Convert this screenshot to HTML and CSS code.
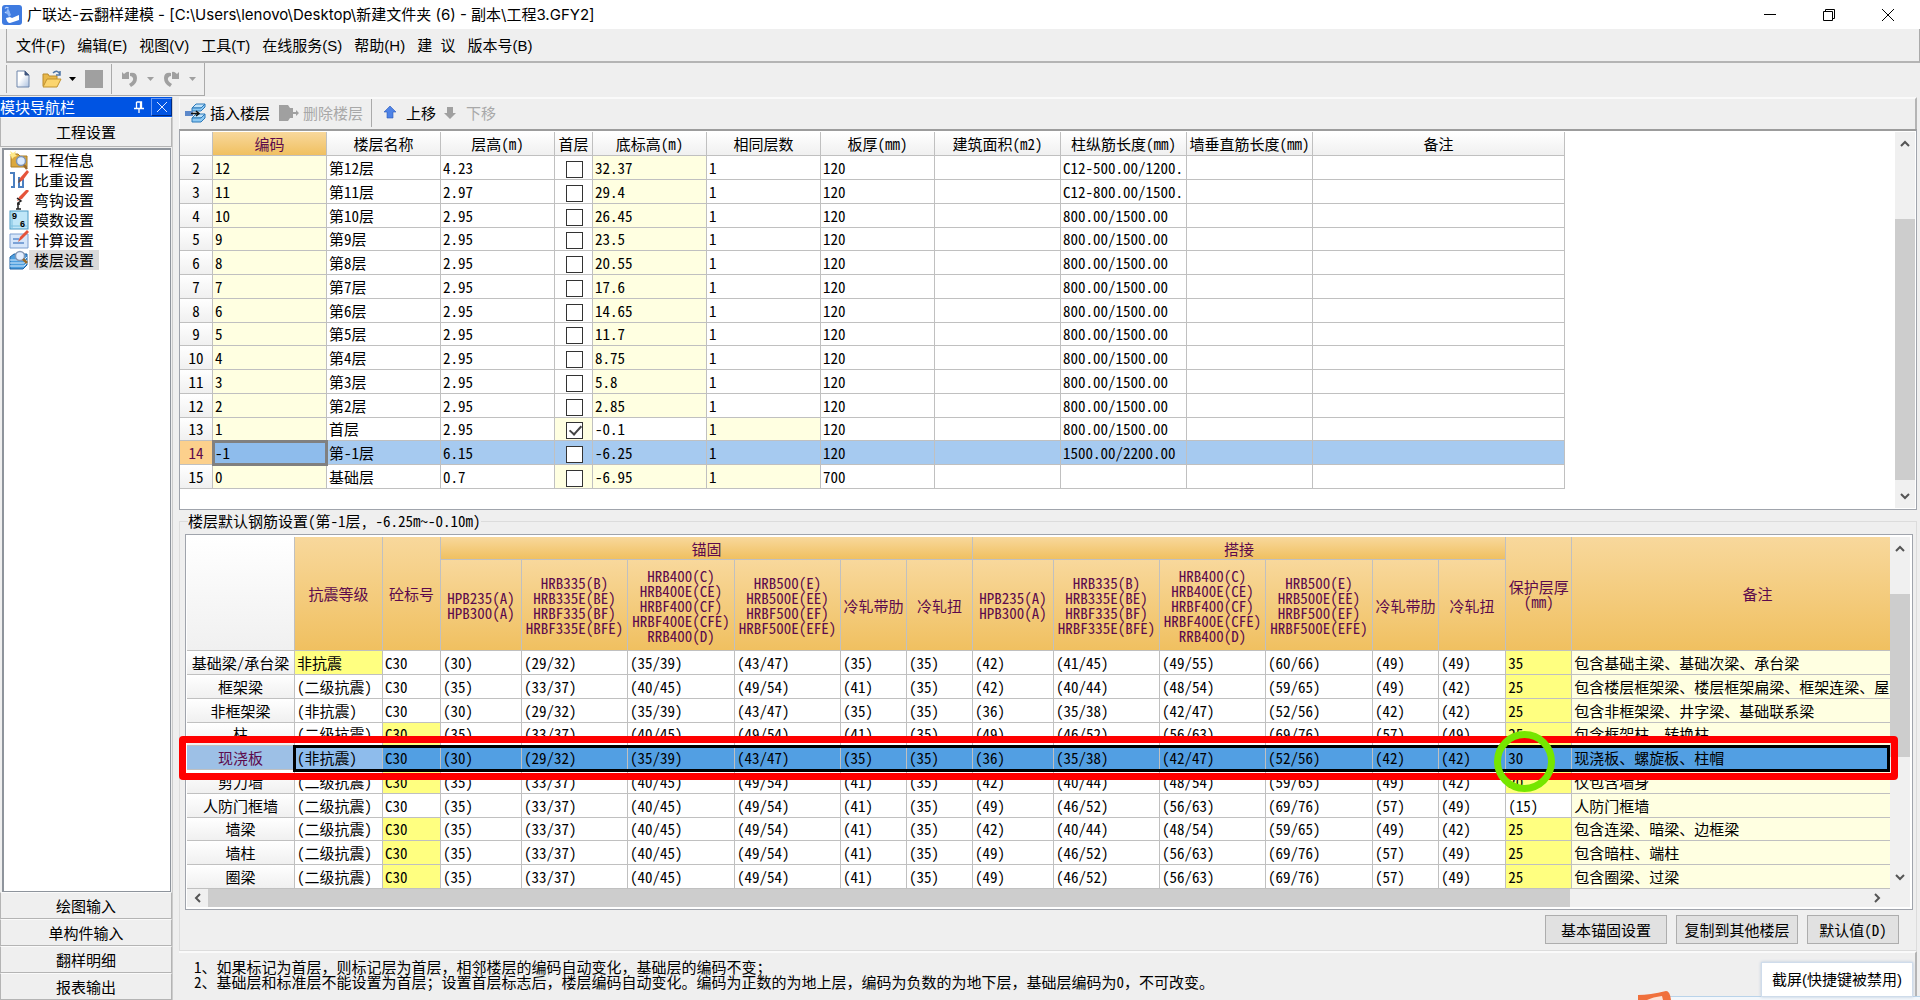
FILE: index.html
```html
<!DOCTYPE html>
<html lang="zh-CN">
<head>
<meta charset="utf-8">
<title>广联达-云翻样建模</title>
<link rel="stylesheet" href="styles.css">
</head>
<body>
<div class="app">
<header class="titlebar">
  <svg class="logo" width="20" height="20" viewBox="0 0 20 20"><rect width="20" height="20" rx="3" fill="#3f7be0"/><path d="M3 3.500q1.500-2 3.500-.5M3 7q2 2 4-1" fill="none" stroke="#bcd6ff" stroke-width="1.200"/><path d="M6 3l3 7-2 2-3-5z" fill="#8fb8f8"/><path d="M4 13l4-1 2 1 7-3v5l-9 3q-3 0-4-5z" fill="#fff"/></svg>
  <h1>广联达-云翻样建模 - [C:\Users\lenovo\Desktop\新建文件夹 (6) - 副本\工程3.GFY2]</h1>
  <div class="winctl">
    <button type="button" aria-label="最小化"><svg width="12" height="12" viewBox="0 0 12 12"><path d="M0 5.500h12" stroke="#000"/></svg></button>
    <button type="button" aria-label="还原"><svg width="12" height="12" viewBox="0 0 12 12" fill="none" stroke="#000"><path d="M.5 2.500h9v9h-9zM2.500 2.500v-2h9v9h-2"/></svg></button>
    <button type="button" aria-label="关闭"><svg width="12" height="12" viewBox="0 0 12 12"><path d="M0 0l12 12M12 0L0 12" stroke="#000"/></svg></button>
  </div>
</header>
<nav class="menubar">
  <button type="button">文件(F)</button><button type="button">编辑(E)</button><button type="button">视图(V)</button><button type="button">工具(T)</button><button type="button">在线服务(S)</button><button type="button">帮助(H)</button><button type="button">建&nbsp; 议</button><button type="button">版本号(B)</button>
</nav>
<div class="toolrow">
  <div class="tools">
    <button type="button" aria-label="新建"><svg width="14" height="18" viewBox="0 0 14 18"><defs><linearGradient id="pg" x2="1" y2="1"><stop offset=".4" stop-color="#fff"/><stop offset="1" stop-color="#a9bfdf"/></linearGradient></defs><path d="M1 1h8l4 4v12H1z" fill="url(#pg)" stroke="#6f86ab"/><path d="M9 1v4h4" fill="#40577e" stroke="#40577e"/></svg></button>
    <button type="button" aria-label="打开"><svg width="20" height="18" viewBox="0 0 20 18"><path d="M1 16V4h5l1 2h8v3" fill="#e8b84a" stroke="#b98a2a"/><path d="M1 17l4-8h14l-4 8z" fill="#fbd56f" stroke="#c0922f"/><path d="M11 3q4-4 7 1M18 1v4h-4" fill="none" stroke="#4f75a5" stroke-width="1.500"/></svg></button>
    <button type="button" class="drop" aria-label="打开列表"><svg width="7" height="4" viewBox="0 0 7 4"><path d="M0 0h7L3.500 4z"/></svg></button>
    <button type="button" aria-label="保存"><svg width="18" height="18"><rect width="18" height="18" fill="#a0a0a0"/></svg></button>
    <i class="sep"></i>
    <button type="button" class="hist" aria-label="撤销"><svg width="17" height="17" viewBox="0 0 17 17"><path d="M1 1l2 2q3-3 5-2v7H1zM9 2q7-1 7 5 0 6-6 9l-2-3q5-3 4-6-1-2-3-2z" fill="#a0a0a0"/></svg></button>
    <button type="button" class="drop" aria-label="撤销列表"><svg width="7" height="4" viewBox="0 0 7 4"><path d="M0 0h7L3.500 4z" fill="#a0a0a0"/></svg></button>
    <button type="button" class="hist" aria-label="重做"><svg width="17" height="17" viewBox="0 0 17 17"><path d="M16 1l-2 2q-3-3-5-2v7h7zM8 2Q1 1 1 7q0 6 6 9l2-3Q4 10 5 7q1-2 3-2z" fill="#a0a0a0"/></svg></button>
    <button type="button" class="drop" aria-label="重做列表"><svg width="7" height="4" viewBox="0 0 7 4"><path d="M0 0h7L3.500 4z" fill="#a0a0a0"/></svg></button>
  </div>
</div>
<div class="body">
<aside class="side">
  <div class="side-title"><span>模块导航栏</span>
    <svg width="10" height="12" viewBox="0 0 10 12"><path d="M2.500 1h5v6M2.500 1v6M0 7.500h10M5 8v4M6.500 1v6" fill="none" stroke="#fff" stroke-width="1.300"/></svg>
    <button type="button" aria-label="关闭导航栏"><svg width="10" height="10" viewBox="0 0 10 10"><path d="M0 0l10 10M10 0L0 10" stroke="#dfe8ff"/></svg></button>
  </div>
  <button type="button" class="side-btn">工程设置</button>
  <ul class="side-list">
    <li><svg width="20" height="20" viewBox="0 0 20 20"><path d="M2 4h7l2 2h7v11H2z" fill="#dba83d" stroke="#a97d26"/><path d="M1 1l3 2 3-2-1 3 2 2-3 1-2 2-1-3-2-1 2-1z" fill="#ffe98a"/><circle cx="12" cy="11" r="4.500" fill="#dcecff" stroke="#7e93b3" stroke-width="1.500"/><path d="M15 15l3 4" stroke="#9a6a2a" stroke-width="2.500"/></svg><a href="#">工程信息</a></li>
    <li><svg width="20" height="20" viewBox="0 0 20 20"><path d="M1 3h4v14H2M10 7v10h4V9" fill="none" stroke="#4b7fc0" stroke-width="2"/><path d="M9 13l2-5 7-8 2 2-6 8z" fill="#e5533a"/><path d="M9 13l1-4 2 2z" fill="#555"/></svg><a href="#">比重设置</a></li>
    <li><svg width="20" height="20" viewBox="0 0 20 20"><path d="M8 11l2-4 8-8 2 2-7 8z" fill="#e5533a"/><path d="M8 8l4 3-3 2v6M7 19h5M8 14h3" fill="none" stroke="#222" stroke-width="1.500"/></svg><a href="#">弯钩设置</a></li>
    <li><svg width="20" height="20" viewBox="0 0 20 20"><rect x="1" y="1" width="18" height="18" fill="#bfe6f8" stroke="#4b9ac4"/><path d="M1 16h18M3 1v18" stroke="#7cc0e0"/><text x="3" y="9" class="ico-num">9</text><text x="11" y="17" class="ico-num">6</text></svg><a href="#">模数设置</a></li>
    <li><svg width="20" height="20" viewBox="0 0 20 20"><path d="M1 4h18v14H1z" fill="#d6e6fa" stroke="#7d9fd0"/><path d="M4 9h6M4 13h11" stroke="#5e8ccb" stroke-width="1.500"/><path d="M9 12l2-5 7-7 2 2-7 7z" fill="#e5533a"/></svg><a href="#">计算设置</a></li>
    <li class="on"><svg width="20" height="20" viewBox="0 0 20 20"><path d="M1 7l4-3h13v11l-4 4H1z" fill="#4d9ede" stroke="#1f62a5"/><path d="M1 10h14l3-3M1 13h14l3-3M1 16h14l3-3" fill="none" stroke="#d8edff"/><circle cx="11" cy="6" r="4.500" fill="#e4efff" stroke="#8497b5" stroke-width="1.500"/><path d="M14 9l4 4" stroke="#9a6a2a" stroke-width="2.500"/></svg><a href="#">楼层设置</a></li>
  </ul>
  <button type="button" class="side-btn">绘图输入</button>
  <button type="button" class="side-btn">单构件输入</button>
  <button type="button" class="side-btn">翻样明细</button>
  <button type="button" class="side-btn">报表输出</button>
</aside>
<main class="main">
  <div class="floorbar">
    <button type="button"><svg width="21" height="20" viewBox="0 0 21 20"><path d="M7 5l4-4h9l-4 4zM7 15l4-4h9l-4 4z" fill="#bfe2fa" stroke="#2b78b9"/><path d="M7 5v3h9l4-4V1l-4 4zM7 15v4h9l4-4v-4l-4 4z" fill="#8cc8f2" stroke="#2b78b9"/><rect y="8" width="8" height="5" fill="#5c88c9"/><path d="M6 10.500h7M11 8l3 2.500L11 13" fill="none" stroke="#111" stroke-width="1.500"/></svg>插入楼层</button>
    <button type="button" disabled><svg width="21" height="18" viewBox="0 0 21 18"><path d="M1 1h9l2 3h3v10h-3l-2 3H1zM15 8h3v-2l3 3-3 3v-2h-3z" fill="#a0a0a0"/></svg>删除楼层</button>
    <i class="sep"></i>
    <button type="button" class="move"><svg width="12" height="13" viewBox="0 0 12 13"><path d="M6 0l6 6H9v6H3V6H0z" fill="#4f83e6" stroke="#2857b8" stroke-width=".6"/></svg>上移</button>
    <button type="button" class="move" disabled><svg width="12" height="13" viewBox="0 0 12 13"><path d="M6 13l6-6H9V1H3v6H0z" fill="#a0a0a0"/></svg>下移</button>
  </div>
  <section class="floors">
    <div class="floors-view">
    <table class="grid floor-table">
      <colgroup><col class="w33"><col class="w114"><col class="w114"><col class="w114"><col class="w38"><col class="w114"><col class="w114"><col class="w114"><col class="w126"><col class="w126"><col class="w126"><col></colgroup>
      <thead><tr><th></th><th class="act">编码</th><th>楼层名称</th><th>层高(m)</th><th>首层</th><th>底标高(m)</th><th>相同层数</th><th>板厚(mm)</th><th>建筑面积(m2)</th><th>柱纵筋长度(mm)</th><th>墙垂直筋长度(mm)</th><th>备注</th></tr></thead>
      <tbody>
      <tr><th>2</th><td class="y">12</td><td>第12层</td><td>4.23</td><td class="c"><input type="checkbox" aria-label="首层 12"></td><td class="y">32.37</td><td>1</td><td>120</td><td></td><td>C12-500.00/1200.</td><td></td><td></td></tr>
      <tr><th>3</th><td class="y">11</td><td>第11层</td><td>2.97</td><td class="c"><input type="checkbox" aria-label="首层 11"></td><td class="y">29.4</td><td>1</td><td>120</td><td></td><td>C12-800.00/1500.</td><td></td><td></td></tr>
      <tr><th>4</th><td class="y">10</td><td>第10层</td><td>2.95</td><td class="c"><input type="checkbox" aria-label="首层 10"></td><td class="y">26.45</td><td>1</td><td>120</td><td></td><td>800.00/1500.00</td><td></td><td></td></tr>
      <tr><th>5</th><td class="y">9</td><td>第9层</td><td>2.95</td><td class="c"><input type="checkbox" aria-label="首层 9"></td><td class="y">23.5</td><td>1</td><td>120</td><td></td><td>800.00/1500.00</td><td></td><td></td></tr>
      <tr><th>6</th><td class="y">8</td><td>第8层</td><td>2.95</td><td class="c"><input type="checkbox" aria-label="首层 8"></td><td class="y">20.55</td><td>1</td><td>120</td><td></td><td>800.00/1500.00</td><td></td><td></td></tr>
      <tr><th>7</th><td class="y">7</td><td>第7层</td><td>2.95</td><td class="c"><input type="checkbox" aria-label="首层 7"></td><td class="y">17.6</td><td>1</td><td>120</td><td></td><td>800.00/1500.00</td><td></td><td></td></tr>
      <tr><th>8</th><td class="y">6</td><td>第6层</td><td>2.95</td><td class="c"><input type="checkbox" aria-label="首层 6"></td><td class="y">14.65</td><td>1</td><td>120</td><td></td><td>800.00/1500.00</td><td></td><td></td></tr>
      <tr><th>9</th><td class="y">5</td><td>第5层</td><td>2.95</td><td class="c"><input type="checkbox" aria-label="首层 5"></td><td class="y">11.7</td><td>1</td><td>120</td><td></td><td>800.00/1500.00</td><td></td><td></td></tr>
      <tr><th>10</th><td class="y">4</td><td>第4层</td><td>2.95</td><td class="c"><input type="checkbox" aria-label="首层 4"></td><td class="y">8.75</td><td>1</td><td>120</td><td></td><td>800.00/1500.00</td><td></td><td></td></tr>
      <tr><th>11</th><td class="y">3</td><td>第3层</td><td>2.95</td><td class="c"><input type="checkbox" aria-label="首层 3"></td><td class="y">5.8</td><td>1</td><td>120</td><td></td><td>800.00/1500.00</td><td></td><td></td></tr>
      <tr><th>12</th><td class="y">2</td><td>第2层</td><td>2.95</td><td class="c"><input type="checkbox" aria-label="首层 2"></td><td class="y">2.85</td><td>1</td><td>120</td><td></td><td>800.00/1500.00</td><td></td><td></td></tr>
      <tr><th>13</th><td class="y">1</td><td>首层</td><td>2.95</td><td class="c y"><input type="checkbox" checked aria-label="首层 1"></td><td>-0.1</td><td class="y">1</td><td>120</td><td></td><td>800.00/1500.00</td><td></td><td></td></tr>
      <tr class="sel"><th>14</th><td class="cur">-1</td><td>第-1层</td><td>6.15</td><td class="c"><input type="checkbox" aria-label="首层 -1"></td><td>-6.25</td><td>1</td><td>120</td><td></td><td>1500.00/2200.00</td><td></td><td></td></tr>
      <tr><th>15</th><td class="y">0</td><td>基础层</td><td>0.7</td><td class="c y"><input type="checkbox" aria-label="首层 0"></td><td class="y">-6.95</td><td class="y">1</td><td>700</td><td></td><td></td><td></td><td></td></tr>
      </tbody>
    </table>
    </div>
    <div class="vbar vbar-top"><svg width="10" height="7" viewBox="0 0 10 7"><path d="M1 6l4-4 4 4" /></svg><i></i><svg width="10" height="7" viewBox="0 0 10 7"><path d="M1 1l4 4 4-4"/></svg></div>
  </section>
  <fieldset class="rebar">
    <legend>楼层默认钢筋设置(第-1层, -6.25m~-0.10m)</legend>
    <div class="rebar-panel">
      <div class="rebar-top">
      <div class="rebar-view">
      <table class="grid rebar-table">
        <colgroup><col class="w108"><col class="w88"><col class="w58"><col class="w81"><col class="w106"><col class="w107"><col class="w106"><col class="w66"><col class="w66"><col class="w81"><col class="w106"><col class="w106"><col class="w107"><col class="w66"><col class="w67"><col class="w66"><col></colgroup>
        <thead>
        <tr class="grp"><th rowspan="2" class="corner"></th><th rowspan="2">抗震等级</th><th rowspan="2">砼标号</th><th colspan="6">锚固</th><th colspan="6">搭接</th><th rowspan="2">保护层厚<br>(mm)</th><th rowspan="2">备注</th></tr>
        <tr class="sub"><th>HPB235(A)<br>HPB300(A)</th><th>HRB335(B)<br>HRB335E(BE)<br>HRBF335(BF)<br>HRBF335E(BFE)</th><th>HRB400(C)<br>HRB400E(CE)<br>HRBF400(CF)<br>HRBF400E(CFE)<br>RRB400(D)</th><th>HRB500(E)<br>HRB500E(EE)<br>HRBF500(EF)<br>HRBF500E(EFE)</th><th>冷轧带肋</th><th>冷轧扭</th><th>HPB235(A)<br>HPB300(A)</th><th>HRB335(B)<br>HRB335E(BE)<br>HRBF335(BF)<br>HRBF335E(BFE)</th><th>HRB400(C)<br>HRB400E(CE)<br>HRBF400(CF)<br>HRBF400E(CFE)<br>RRB400(D)</th><th>HRB500(E)<br>HRB500E(EE)<br>HRBF500(EF)<br>HRBF500E(EFE)</th><th>冷轧带肋</th><th>冷轧扭</th></tr>
        </thead>
        <tbody>
        <tr><th>基础梁/承台梁</th><td class="k">非抗震</td><td>C30</td><td>(30)</td><td>(29/32)</td><td>(35/39)</td><td>(43/47)</td><td>(35)</td><td>(35)</td><td>(42)</td><td>(41/45)</td><td>(49/55)</td><td>(60/66)</td><td>(49)</td><td>(49)</td><td class="k">35</td><td class="y">包含基础主梁、基础次梁、承台梁</td></tr>
        <tr><th>框架梁</th><td>(二级抗震)</td><td>C30</td><td>(35)</td><td>(33/37)</td><td>(40/45)</td><td>(49/54)</td><td>(41)</td><td>(35)</td><td>(42)</td><td>(40/44)</td><td>(48/54)</td><td>(59/65)</td><td>(49)</td><td>(42)</td><td class="k">25</td><td class="y">包含楼层框架梁、楼层框架扁梁、框架连梁、屋</td></tr>
        <tr><th>非框架梁</th><td>(非抗震)</td><td>C30</td><td>(30)</td><td>(29/32)</td><td>(35/39)</td><td>(43/47)</td><td>(35)</td><td>(35)</td><td>(36)</td><td>(35/38)</td><td>(42/47)</td><td>(52/56)</td><td>(42)</td><td>(42)</td><td class="k">25</td><td class="y">包含非框架梁、井字梁、基础联系梁</td></tr>
        <tr><th>柱</th><td>(二级抗震)</td><td class="k">C30</td><td>(35)</td><td>(33/37)</td><td>(40/45)</td><td>(49/54)</td><td>(41)</td><td>(35)</td><td>(49)</td><td>(46/52)</td><td>(56/63)</td><td>(69/76)</td><td>(57)</td><td>(49)</td><td class="k">25</td><td class="y">包含框架柱、转换柱</td></tr>
        <tr class="pick"><th>现浇板</th><td class="cur">(非抗震)</td><td>C30</td><td>(30)</td><td>(29/32)</td><td>(35/39)</td><td>(43/47)</td><td>(35)</td><td>(35)</td><td>(36)</td><td>(35/38)</td><td>(42/47)</td><td>(52/56)</td><td>(42)</td><td>(42)</td><td>30</td><td>现浇板、螺旋板、柱帽</td></tr>
        <tr><th>剪力墙</th><td>(二级抗震)</td><td class="k">C30</td><td>(35)</td><td>(33/37)</td><td>(40/45)</td><td>(49/54)</td><td>(41)</td><td>(35)</td><td>(42)</td><td>(40/44)</td><td>(48/54)</td><td>(59/65)</td><td>(49)</td><td>(42)</td><td class="k">20</td><td class="y">仅包含墙身</td></tr>
        <tr><th>人防门框墙</th><td>(二级抗震)</td><td>C30</td><td>(35)</td><td>(33/37)</td><td>(40/45)</td><td>(49/54)</td><td>(41)</td><td>(35)</td><td>(49)</td><td>(46/52)</td><td>(56/63)</td><td>(69/76)</td><td>(57)</td><td>(49)</td><td>(15)</td><td class="y">人防门框墙</td></tr>
        <tr><th>墙梁</th><td>(二级抗震)</td><td class="k">C30</td><td>(35)</td><td>(33/37)</td><td>(40/45)</td><td>(49/54)</td><td>(41)</td><td>(35)</td><td>(42)</td><td>(40/44)</td><td>(48/54)</td><td>(59/65)</td><td>(49)</td><td>(42)</td><td class="k">25</td><td class="y">包含连梁、暗梁、边框梁</td></tr>
        <tr><th>墙柱</th><td>(二级抗震)</td><td class="k">C30</td><td>(35)</td><td>(33/37)</td><td>(40/45)</td><td>(49/54)</td><td>(41)</td><td>(35)</td><td>(49)</td><td>(46/52)</td><td>(56/63)</td><td>(69/76)</td><td>(57)</td><td>(49)</td><td class="k">25</td><td class="y">包含暗柱、端柱</td></tr>
        <tr><th>圈梁</th><td>(二级抗震)</td><td class="k">C30</td><td>(35)</td><td>(33/37)</td><td>(40/45)</td><td>(49/54)</td><td>(41)</td><td>(35)</td><td>(49)</td><td>(46/52)</td><td>(56/63)</td><td>(69/76)</td><td>(57)</td><td>(49)</td><td class="k">25</td><td class="y">包含圈梁、过梁</td></tr>
        </tbody>
      </table>
      <div class="row-frame"></div>
      </div>
      <div class="vbar vbar-low"><svg width="10" height="7" viewBox="0 0 10 7"><path d="M1 6l4-4 4 4"/></svg><i></i><svg width="10" height="7" viewBox="0 0 10 7"><path d="M1 1l4 4 4-4"/></svg></div>
      </div>
      <div class="hbar"><svg width="7" height="10" viewBox="0 0 7 10"><path d="M6 1L2 5l4 4"/></svg><i></i><svg width="7" height="10" viewBox="0 0 7 10"><path d="M1 1l4 4-4 4"/></svg></div>
      <div class="mark-box"></div>
      <div class="mark-ring"></div>
    </div>
    <div class="actions"><button type="button">基本锚固设置</button><button type="button">复制到其他楼层</button><button type="button">默认值(D)</button></div>
  </fieldset>
  <footer class="hints">
    <p>1、如果标记为首层，则标记层为首层，相邻楼层的编码自动变化，基础层的编码不变；</p>
    <p>2、基础层和标准层不能设置为首层；设置首层标志后，楼层编码自动变化。编码为正数的为地上层，编码为负数的为地下层，基础层编码为0，不可改变。</p>
  </footer>
</main>
</div>
<svg class="peek" width="300" height="9" viewBox="0 0 300 9"><path d="M28 5h272v4H28z" fill="#f3f7fb"/><path d="M28 5.500h272" stroke="#b9d3ea"/><path d="M0 4q12 0 28-4q4 0 5 9H0z" fill="#f0703c"/><path d="M9 9q6-3 15-4l1 4z" fill="#fbe3d8"/></svg>
<div class="tip" role="tooltip">截屏(快捷键被禁用)</div>
</div>
</body>
</html>
```
FILE: styles.css
```css
* { box-sizing: border-box; }
body { margin: 0; background: #efefef; color: #000; }
body, button, input { font: 15px/20px "Noto Sans Mono CJK SC", "Liberation Mono", "Noto Sans CJK SC", monospace; }
button { border: 0; padding: 0; background: none; color: inherit; display: inline-flex; align-items: center; justify-content: center; white-space: nowrap; }
.app { position: relative; min-height: 100vh; display: flex; flex-direction: column; overflow: hidden; }

.titlebar { display: flex; align-items: center; height: 29px; padding-left: 2px; background: #fff; }
.titlebar h1 { flex: 1; margin: 0 0 0 5px; font: 15px/28px Inter, "Noto Sans CJK SC", sans-serif; }
.winctl { display: flex; gap: 10px; padding-right: 8px; }
.winctl button { width: 49px; height: 28px; }

.menubar, .tip { font-family: "Liberation Sans", "Noto Sans CJK SC", sans-serif; }
.menubar { display: flex; gap: 12px; height: 34px; margin-left: 6px; padding: 2px 0 0 9px; border-left: 1px solid #aaa; border-bottom: 2px solid #b4b4b4; border-right: 1px solid #aaa; }
.menubar button { font-family: inherit; }

.toolrow { height: 34px; }
.tools { display: flex; align-items: center; width: 205px; height: 33px; padding: 0 8px 0 6px; border-right: 1px solid #aaa; border-bottom: 1px solid #aaa; }
.tools::before { content: ""; width: 1px; height: 28px; background: #aaa; margin-right: 9px; }
.tools button { margin-right: 12px; }
.tools .drop { margin: 0 9px 0 0; }
.tools button:nth-of-type(2) { margin-right: 7px; }
.tools button:nth-of-type(4) { margin-right: 8px; }
.tools .hist { margin-right: 9px; }
.tools .drop:last-child { margin-right: 0; }
.sep { width: 1px; height: 30px; background: #aaa; margin-right: 9px; flex: none; }

.body { flex: 1; display: flex; gap: 6px; }
.side { width: 173px; display: flex; flex-direction: column; border-right: 1px solid #ccc; }
.side-title { display: flex; align-items: center; height: 20px; background: #0054e3; color: #fff; }
.side-title span { flex: 1; }
.side-title button { width: 21px; height: 18px; margin-left: 7px; border: 1px solid #6d9cf5; border-right-color: #002a80; border-bottom-color: #002a80; }
.side-btn { height: 27px; border: 1px solid #b4b4b4; border-top-color: #fafafa; }
.side-title + .side-btn { height: 30px; }
.side-list { flex: 1; margin: 1px 1px 0 2px; padding: 0 5px; list-style: none; background: #fff; border: 1px solid #8e949c; border-top-width: 2px; border-left-width: 2px; }
.side-list li { display: flex; align-items: center; height: 20px; }
.side-list a { color: #000; text-decoration: none; padding: 0 5px; line-height: 20px; }
.side-list .on a { background: #d9d9d9; }
.ico-num { font: bold 9px "Liberation Sans", sans-serif; }

.main { flex: 1; min-width: 0; display: flex; flex-direction: column; padding-right: 3px; }
.floorbar { display: flex; align-items: center; height: 32px; padding: 0 0 3px 5px; border-top: 2px solid #fafafa; border-right: 2px solid #b4b4b4; border-left: 1px solid #fafafa; }
.floorbar button { gap: 4px; margin-right: 8px; }
.floorbar .sep { margin-right: 12px; height: 28px; }
.floorbar .move { gap: 10px; }
.floorbar :disabled { color: #a8a8a8; }

.floors { display: flex; height: 381px; background: #fff; border: 1px solid #a0a4ac; border-top: 2px solid #9c9c9c; padding: 1px 1px 1px 0; }
.floors-view { flex: 1; overflow: hidden; }
.floor-table { width: 1385px; }

.grid { table-layout: fixed; border-collapse: separate; border-spacing: 0; }
.grid th, .grid td { padding: 0; border-right: 1px solid #c0c0c0; border-bottom: 1px solid #c0c0c0; font-weight: 400; white-space: nowrap; overflow: hidden; line-height: 20px; }
.grid td { padding-left: 2px; background: #fff; }
.grid tr { height: 24px; }
.grid tbody tr:nth-child(4n) { height: 23px; }
.grid th { background: linear-gradient(#fff, #f0f0f0); }
.grid .act, .rebar-table thead th { background: linear-gradient(#f8d89c, #f0c060); color: #5c0a4c; }
.grid td.y { background: #ffffe1; }
.grid td.k { background: #ffff80; }
.grid td.c { padding: 0; text-align: center; }
.grid .sel td { background: #a6caf0; }
.grid .sel th { background: #fcd08c; color: #5c0a4c; }
.grid .sel .cur { background: #8ebcec; outline: 3px solid #808080; outline-offset: -2px; }
.grid input { appearance: none; display: inline-block; width: 17px; height: 17px; margin: 0 0 0 1px; border: 1px solid #333; background: #fff; vertical-align: middle; }
.grid input:checked::after { content: ""; display: block; width: 5px; height: 10px; margin: 0 0 0 5px; border: solid #444; border-width: 0 2px 2px 0; transform: rotate(42deg); }

.w33 { width: 33px; } .w38 { width: 38px; } .w58 { width: 58px; } .w66 { width: 66px; } .w67 { width: 67px; }
.w81 { width: 81px; } .w88 { width: 88px; } .w106 { width: 106px; } .w107 { width: 107px; } .w108 { width: 108px; }
.w114 { width: 114px; } .w126 { width: 126px; }

.vbar { width: 20px; display: flex; flex-direction: column; align-items: center; background: #f0f0f0; padding: 8px 0; }
.vbar i, .hbar i { background: #cdcdcd; }
.vbar i { width: 20px; }
.vbar path, .hbar path { fill: none; stroke: #555; stroke-width: 2; }
.vbar-top i { flex: 1; margin: 72px 0 13px; }
.vbar-low i { height: 163px; margin: 42px 0 auto; }

.rebar { min-width: 0; margin: 0; padding: 2px 3px 6px 5px; border: 1px solid #dcdcdc; }
.rebar legend { margin-left: 3px; padding: 0; line-height: 22px; }
.rebar-panel { position: relative; border: 1px solid #a0a4ac; background: #fff; padding: 2px 2px 2px 1px; }
.rebar-top { display: flex; height: 352px; }
.rebar-view { position: relative; flex: 1; min-width: 0; overflow: hidden; }
/* the remarks column runs past the viewport, behind the scrollbar */
.rebar-table { width: calc(100% + 54px); }
.grid .grp { height: 23px; }
.grid .sub { height: 91px; }
.rebar-table thead th { line-height: 15px; }
.rebar-table thead .corner { background: linear-gradient(#fff, #f0f0f0); }
.grid .pick td { background: #529fe3; }
.grid .pick th { background: #9dc0e6; color: #5c0a4c; }
.grid .pick .cur { background: #8ebcec; }
.row-frame { position: absolute; left: 106px; right: 0; top: 208px; height: 27px; border: 3px solid #000; }
.mark-box { position: absolute; left: -7px; right: 14px; top: 201px; height: 44px; border: 7px solid #f00; border-radius: 4px; }
.mark-ring { position: absolute; right: 357px; top: 196px; width: 61px; height: 61px; border: 7px solid #76e600; border-radius: 50%; }
.hbar { display: flex; align-items: center; height: 18px; padding: 0 29px 0 7px; background: #f0f0f0; }
.hbar i { flex: 1; height: 18px; margin: 0 304px 0 7px; }

.actions { display: flex; justify-content: flex-end; gap: 9px; padding: 5px 14px 0 0; }
.actions button { height: 29px; width: 122px; background: #e1e1e1; border: 1px solid #adadad; }
.actions button:last-child { width: 92px; }

.hints { flex: 1; padding: 6px 14px 0 15px; border-top: 2px solid #fafafa; border-right: 2px solid #b4b4b4; }
.hints p { margin: 0; line-height: 15px; }

.peek { position: absolute; right: -18px; bottom: 0; }
.tip { position: absolute; right: 7px; bottom: 3px; padding: 0 10px; background: #fff; border: 1px solid #cfdceb; box-shadow: 0 0 3px #b8c8dc; line-height: 33px; }
```
